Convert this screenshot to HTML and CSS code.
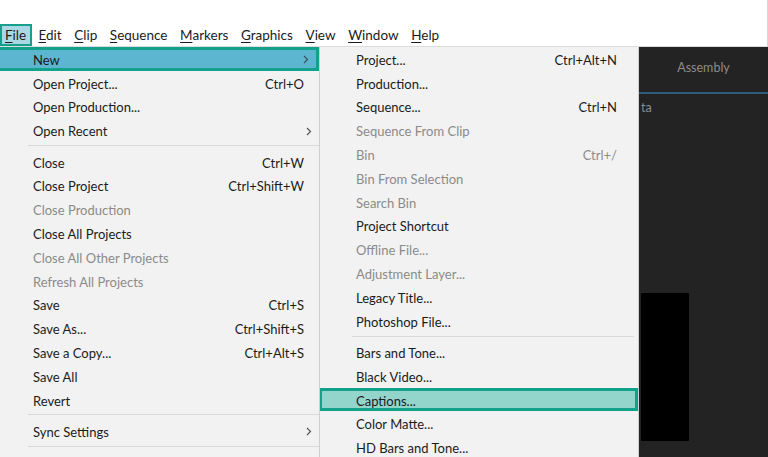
FILE: index.html
```html
<!DOCTYPE html>
<html lang="en">

<head>
    <meta charset="UTF-8">
    <title>File menu</title>
    <link rel="stylesheet" href="styles.css">
</head>

<body>
    <div class="topbar"></div>
    <div class="menubar">
        <span class="mb-item active"><u>F</u>ile</span>
        <span class="mb-item"><u>E</u>dit</span>
        <span class="mb-item"><u>C</u>lip</span>
        <span class="mb-item"><u>S</u>equence</span>
        <span class="mb-item"><u>M</u>arkers</span>
        <span class="mb-item"><u>G</u>raphics</span>
        <span class="mb-item"><u>V</u>iew</span>
        <span class="mb-item"><u>W</u>indow</span>
        <span class="mb-item"><u>H</u>elp</span>
    </div>

    <div class="main">
        <!-- file menu -->
        <div class="menu file-menu">
            <div class="item open">
                <span class="label">New</span>
                <svg class="arrow" width="6" height="9" viewBox="0 0 6 9"><path d="M1 1 L4.5 4.5 L1 8" fill="none" stroke="#3a5560" stroke-width="1.2"/></svg>
            </div>
            <div class="item"><span class="label">Open Project...</span><span class="key">Ctrl+O</span></div>
            <div class="item"><span class="label">Open Production...</span></div>
            <div class="item">
                <span class="label">Open Recent</span>
                <svg class="arrow" width="6" height="9" viewBox="0 0 6 9"><path d="M1 1 L4.5 4.5 L1 8" fill="none" stroke="#555" stroke-width="1.2"/></svg>
            </div>
            <div class="sep"></div>
            <div class="item"><span class="label">Close</span><span class="key">Ctrl+W</span></div>
            <div class="item"><span class="label">Close Project</span><span class="key">Ctrl+Shift+W</span></div>
            <div class="item off"><span class="label">Close Production</span></div>
            <div class="item"><span class="label">Close All Projects</span></div>
            <div class="item off"><span class="label">Close All Other Projects</span></div>
            <div class="item off"><span class="label">Refresh All Projects</span></div>
            <div class="item"><span class="label">Save</span><span class="key">Ctrl+S</span></div>
            <div class="item"><span class="label">Save As...</span><span class="key">Ctrl+Shift+S</span></div>
            <div class="item"><span class="label">Save a Copy...</span><span class="key">Ctrl+Alt+S</span></div>
            <div class="item"><span class="label">Save All</span></div>
            <div class="item"><span class="label">Revert</span></div>
            <div class="sep"></div>
            <div class="item">
                <span class="label">Sync Settings</span>
                <svg class="arrow" width="6" height="9" viewBox="0 0 6 9"><path d="M1 1 L4.5 4.5 L1 8" fill="none" stroke="#555" stroke-width="1.2"/></svg>
            </div>
            <div class="sep"></div>
        </div>

        <!-- new submenu -->
        <div class="menu sub-menu">
            <div class="item"><span class="label">Project...</span><span class="key">Ctrl+Alt+N</span></div>
            <div class="item"><span class="label">Production...</span></div>
            <div class="item"><span class="label">Sequence...</span><span class="key">Ctrl+N</span></div>
            <div class="item off"><span class="label">Sequence From Clip</span></div>
            <div class="item off"><span class="label">Bin</span><span class="key">Ctrl+/</span></div>
            <div class="item off"><span class="label">Bin From Selection</span></div>
            <div class="item off"><span class="label">Search Bin</span></div>
            <div class="item"><span class="label">Project Shortcut</span></div>
            <div class="item off"><span class="label">Offline File...</span></div>
            <div class="item off"><span class="label">Adjustment Layer...</span></div>
            <div class="item"><span class="label">Legacy Title...</span></div>
            <div class="item"><span class="label">Photoshop File...</span></div>
            <div class="sep"></div>
            <div class="item"><span class="label">Bars and Tone...</span></div>
            <div class="item"><span class="label">Black Video...</span></div>
            <div class="item picked"><span class="label">Captions...</span></div>
            <div class="item"><span class="label">Color Matte...</span></div>
            <div class="item"><span class="label">HD Bars and Tone...</span></div>
        </div>

        <!-- app behind -->
        <div class="panel">
            <div class="tab">Assembly</div>
            <div class="tab-line"></div>
            <div class="panel-text">ta</div>
            <div class="monitor"></div>
        </div>
    </div>
</body>

</html>
```
FILE: styles.css
```css
html, body {
    margin: 0;
    padding: 0;
}

body {
    width: 768px;
    height: 457px;
    overflow: hidden;
    background: #fff;
    font-family: "Lato", "Noto Sans", sans-serif;
    font-size: 13px;
    color: #1b1b1b;
}

.topbar {
    height: 24px;
    border-right: 1px solid #d6d6d6;
}

/* menu bar */
.menubar {
    height: 22px;
    display: flex;
    align-items: center;
    border-right: 1px solid #d6d6d6;
    border-bottom: 1px solid #dcdcdc;
    font-size: 13.5px;
}

.mb-item {
    height: 22px;
    line-height: 22px;
    padding: 0 6.3px;
    box-sizing: border-box;
}

.mb-item u {
    text-underline-offset: 2px;
}

.mb-item.active {
    padding: 0 4px 0 3px;
    background: #a9d9e5;
    border: 2px solid #16a08c;
    line-height: 18px;
}

/* menus */
.main {
    display: flex;
    height: 410px;
}

.menu {
    background: #f2f2f2;
    box-sizing: border-box;
    border-right: 1px solid #cfcfcf;
}

.file-menu {
    width: 320px;
}

.sub-menu {
    width: 319px;
}

.item {
    height: 23.8px;
    display: flex;
    align-items: center;
    padding-top: 2px;
    padding-left: 33px;
    padding-right: 15px;
    box-sizing: border-box;
}

.sub-menu .item {
    padding-left: 36px;
    padding-right: 21px;
}

.label {
    flex: 1;
}

.key {
    white-space: nowrap;
}

.arrow {
    margin-right: -8px;
}

.off {
    color: #8b8b8b;
}

.sep {
    height: 1px;
    background: #d9d9d9;
    margin: 3px 0 3.5px 28px;
}

.sub-menu .sep {
    margin-left: 32px;
    margin-right: 4px;
}

.item.open {
    background: #5cb6cf;
    border: 3px solid #13a18b;
    border-left: none;
    padding-left: 33px;
}

.item.picked {
    background: #93d4cb;
    border: 3px solid #13a18b;
    border-left-width: 2px;
    padding-left: 34px;
}

/* dark panel */
.panel {
    flex: 1;
    background: #232323;
    color: #8c8c8c;
}

.tab {
    height: 45px;
    line-height: 41px;
    text-align: center;
    font-size: 12.5px;
}

.tab-line {
    height: 2px;
    background: #2f5c7c;
}

.panel-text {
    padding: 6px 0 0 2px;
    font-size: 12.5px;
}

.monitor {
    width: 48px;
    height: 148px;
    margin: 178px 0 0 2px;
    background: #000;
    border-radius: 1px;
}
```
